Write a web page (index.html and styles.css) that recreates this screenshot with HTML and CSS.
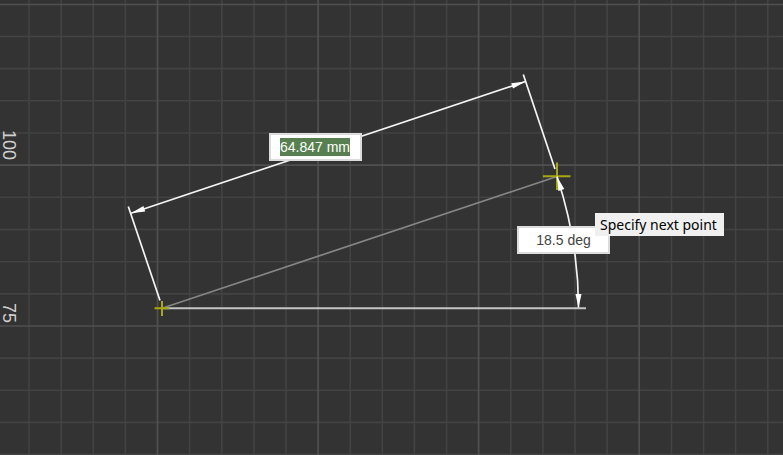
FILE: index.html
```
<!DOCTYPE html>
<html lang="en">
<head>
<meta charset="utf-8">
<title>Drawing</title>
<link rel="stylesheet" href="styles.css">
</head>
<body>
<main class="canvas">
  <svg class="drawing" aria-hidden="true">
    <path class="grid" d="M29 0V4000M61.2 0V4000M93.3 0V4000M125.4 0V4000M189.6 0V4000M221.8 0V4000M253.9 0V4000M286 0V4000M350.2 0V4000M382.3 0V4000M414.4 0V4000M446.6 0V4000M510.8 0V4000M542.9 0V4000M575 0V4000M607.1 0V4000M671.5 0V4000M703.6 0V4000M735.6 0V4000M767.8 0V4000"/>
    <path class="grid" d="M0 36.5H4000M0 68.6H4000M0 100.8H4000M0 133H4000M0 197.3H4000M0 229.5H4000M0 261.7H4000M0 293.9H4000M0 358.1H4000M0 390.2H4000M0 422.4H4000M0 454.5H4000"/>
    <path class="grid major" d="M157.5 0V4000M318.1 0V4000M478.6 0V4000M639.2 0V4000M0 4.5H4000M0 165.1H4000M0 326H4000"/>
    <text class="ruler" transform="translate(3 130) rotate(90)">100</text>
    <text class="ruler" transform="translate(3 303) rotate(90)">75</text>
    <path class="baseline" d="M162 308.3H586"/>
    <path class="segment" d="M162 308.3L557 176.5"/>
    <path class="cross" d="M154.500 308.3H169M162 301V316M543 176.300H570.500M557 162.500V190"/>
    <path class="dimension" d="M128.300 206.500L160 300.500M523.300 74.500L555 169M131 213.200L525.500 81.500M557 176.500C571 219 578.500 263 578.500 307.500"/>
    <path class="arrow" d="M131 213.200L143.400 206L145.200 211.400ZM525.500 81.500L511.200 83.200L513 88.600ZM557.200 177L558.300 191L564.300 189.100ZM578.500 308L575.500 294H581.500Z"/>
  </svg>
  <input class="value length selected" type="text" value="64.847 mm" aria-label="Length">
  <input class="value angle" type="text" value="18.5 deg" aria-label="Angle">
  <div class="hint" role="tooltip">Specify next point</div>
</main>
</body>
</html>
```
FILE: styles.css
```
* { box-sizing: border-box; }

body { margin: 0; }

.canvas {
  position: relative;
  min-height: 100vh;
  overflow: hidden;
  background: #333;
}

.drawing {
  position: absolute;
  inset: 0;
  width: 100%;
  height: 100%;
  fill: none;
}

.grid { stroke: #434343; stroke-width: 1.6; }
.major { stroke: #505050; stroke-width: 1.7; }

.ruler {
  fill: #d0d0d0;
  font: 18px "Liberation Sans", Arial, sans-serif;
}

.baseline { stroke: #c4c4c4; stroke-width: 2; }
.segment { stroke: #858585; stroke-width: 1.7; }
.cross { stroke: #a8a810; stroke-width: 2; }
.dimension { stroke: #f4f4f4; stroke-width: 1.7; }
.arrow { fill: #fff; }

.value {
  position: absolute;
  width: 93px;
  height: 28px;
  padding: 0;
  border: 2px solid #dcdcdc;
  border-radius: 0;
  background: #fff;
  color: #444;
  font: 14px "Liberation Sans", Arial, sans-serif;
  text-align: center;
  outline: 0;
}

.length { left: 269px; top: 133px; }
.angle { left: 517px; top: 226px; }

.selected {
  padding-right: 1px;
  background: linear-gradient(#587f50, #587f50) 9px center / 70px 18px no-repeat #fff;
  color: #fff;
}

.hint {
  position: absolute;
  left: 595px;
  top: 213px;
  padding: 1px 7px 1px 5px;
  background: #f0f0f0;
  color: #000;
  font: 14px/21px "Noto Sans", "Segoe UI", sans-serif;
  white-space: nowrap;
}
```
